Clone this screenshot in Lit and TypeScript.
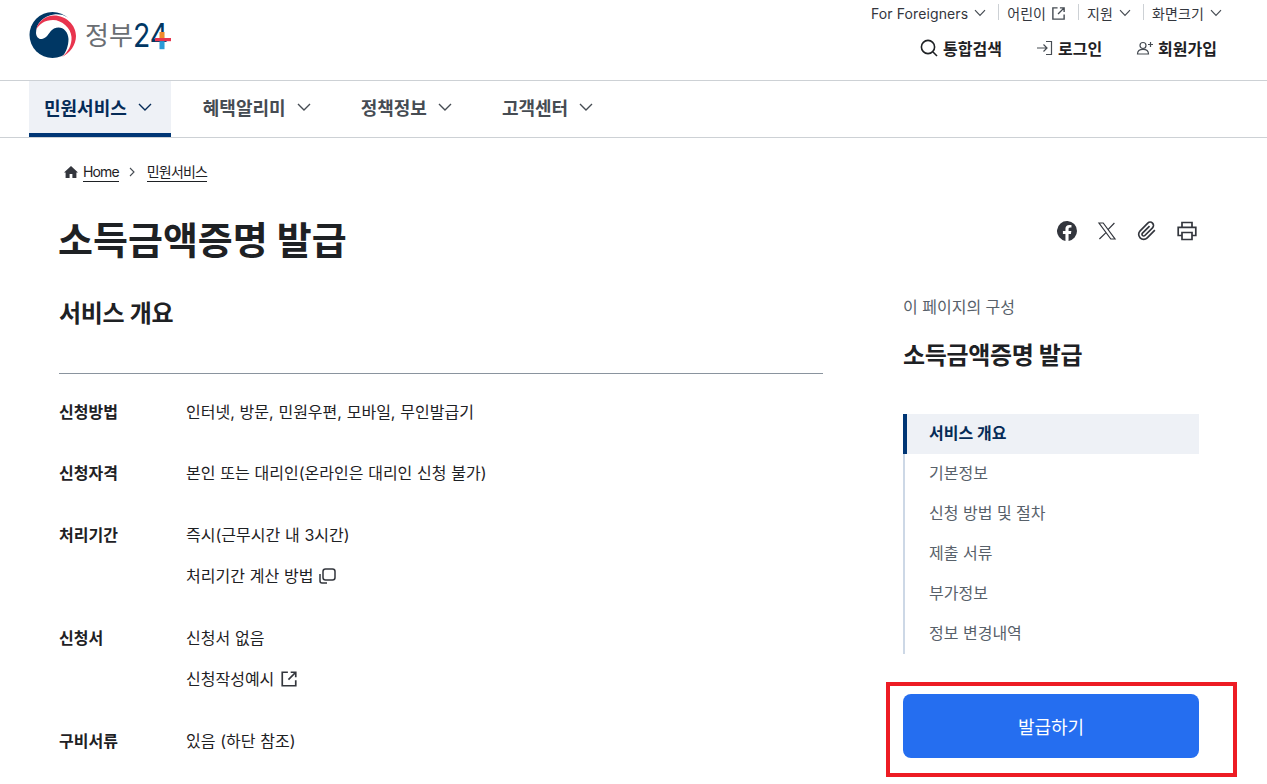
import { LitElement, html, css } from "lit";
import { customElement } from "lit/decorators.js";

const chev = html`<svg class="chev" viewBox="0 0 12 8" fill="none" stroke="currentColor" stroke-width="1.2"><path d="M1 1.2 6 6.4 11 1.2"/></svg>`;
const navChev = html`<svg class="navchev" viewBox="0 0 14 8" fill="none" stroke="currentColor" stroke-width="1.4"><path d="M1 1 7 7 13 1"/></svg>`;
const ext = (c: string) => html`<svg class=${c} viewBox="0 0 16 16" fill="none" stroke="currentColor" stroke-width="1.5"><path d="M7 2H2v12h12V9M9.5 2H14v4.5M14 2 7.5 8.5"/></svg>`;

const rows: [string, string[]][] = [
  ["신청방법", ["인터넷, 방문, 민원우편, 모바일, 무인발급기"]],
  ["신청자격", ["본인 또는 대리인(온라인은 대리인 신청 불가)"]],
  ["처리기간", ["즉시(근무시간 내 3시간)", "처리기간 계산 방법|copy"]],
  ["신청서", ["신청서 없음", "신청작성예시|ext"]],
  ["구비서류", ["있음 (하단 참조)"]],
];
const toc = ["서비스 개요", "기본정보", "신청 방법 및 절차", "제출 서류", "부가정보", "정보 변경내역"];

@customElement("app-root")
export class AppRoot extends LitElement {
  static styles = css`
    :host { display: block; width: 1267px; height: 784px; overflow: hidden; position: relative; background: #fff;
      font-family: "Inter", "Noto Sans CJK KR", sans-serif; color: #1e2124; }
    a { color: inherit; text-decoration: none; }
    .header { height: 81px; box-sizing: border-box; border-bottom: 1px solid #cdd1d5; display: flex; justify-content: space-between; padding: 0 45px 0 29px; }
    .logo { display: flex; align-items: flex-start; padding-top: 12px; gap: 9px; }
    .logo-mark { width: 47px; height: 46px; }
    .logo-word { width: 86px; height: 46px; overflow: visible; }
    .util { display: flex; flex-direction: column; align-items: flex-end; }
    .top { display: flex; align-items: center; height: 16px; margin-top: 5px; font-size: 14px; letter-spacing: 0.1px; color: #33363d; }
    .top .it { display: flex; align-items: center; gap: 6px; padding: 0 12px 0 9px; position: relative; }
    .top .it:last-child { padding-right: 0; }
    .top .it + .it::before { content: ""; position: absolute; left: 0; top: 1px; height: 16px; width: 1px; background: #cdd1d5; }
    .chev { width: 12px; height: 8px; color: #464c53; }
    .ext-s { width: 15px; height: 15px; color: #464c53; margin-left: -1px; }
    .bottom { display: flex; gap: 34px; margin-top: 17px; margin-right: 5px; font-size: 16px; font-weight: 700; color: #1e2124; }
    .bottom a { display: flex; align-items: center; gap: 4px; height: 20px; }
    .ic { width: 18px; height: 18px; }
    .ic.search { margin-right: 1px; }
    .nav { height: 57px; box-sizing: border-box; border-bottom: 1px solid #cdd1d5; display: flex; padding-left: 29px; gap: 16px; }
    .tab { display: flex; align-items: center; gap: 11px; padding: 0 19px 0 15px; height: 56px; box-sizing: border-box; font-size: 18px; font-weight: 700; color: #464c53; border-bottom: 4px solid transparent; }
    .tab.on { background: #eef1f6; color: #052b57; border-bottom-color: #003675; margin-right: 1px; }
    .navchev { width: 14px; height: 8px; }
    .crumb { display: flex; align-items: center; margin: 24px 0 0 64px; height: 20px; font-size: 14px; letter-spacing: -0.85px; color: #1e2124; }
    .crumb a { border-bottom: 1px solid #1e2124; line-height: 18px; }
    .crumb .home { width: 14px; height: 14px; margin-right: 5px; }
    .crumb .sep { width: 7px; height: 10px; margin: 0 11px 0 10px; color: #464c53; }
    .title-row { display: flex; justify-content: space-between; align-items: center; margin: 30px 70px 0 59px; }
    h1 { margin: 0 0 0 -1px; font-size: 38px; font-weight: 700; line-height: 56px; color: #1e2124; }
    .share { display: flex; gap: 20px; margin-top: -18px; }
    .share svg { width: 20px; height: 20px; color: #33363d; display: block; }
    .cols { display: flex; justify-content: space-between; margin: 0 68px 0 59px; }
    .main { width: 764px; }
    h2 { margin: 29px 0 0; font-size: 24px; letter-spacing: -0.3px; line-height: 34px; font-weight: 700; padding-bottom: 42px; border-bottom: 1px solid #8a949e; color: #1e2124; }
    .row { display: flex; font-size: 16px; line-height: 24px; word-spacing: 0.3px; color: #1e2124; }
    .row .k { width: 127px; flex: none; font-weight: 700; }
    .row .v { display: flex; flex-direction: column; gap: 17px; }
    .row .v span { display: flex; align-items: center; gap: 5px; }
    .rows { display: flex; flex-direction: column; gap: 37.75px; padding-top: 25.6px; }
    .copy, .ext-m { width: 18px; height: 18px; color: #33363d; }
    .ext-m { margin-left: 1px; }
    .side { width: 296px; }
    .side-h { margin-top: 28px; font-size: 16px; line-height: 22px; color: #58616a; }
    h3 { margin: 22px 0 0; font-size: 24px; letter-spacing: -0.35px; line-height: 32px; font-weight: 700; color: #1e2124; }
    .toc { margin-top: 42px; border-left: 2px solid #cdd8e6; display: flex; flex-direction: column; }
    .toc a { height: 40px; box-sizing: border-box; padding-bottom: 4px; display: flex; align-items: center; padding-left: 24px; font-size: 16px; color: #58616a; }
    .toc a.on { background: #eef1f6; color: #052b57; font-weight: 700; border-left: 4px solid #003675; margin-left: -2px; padding-left: 22px; }
    .issue { margin-top: 40px; height: 64px; border-radius: 8px; background: #256ef0; color: #fff; display: flex; align-items: center; justify-content: center; font-size: 18px; font-weight: 400; }
    .mark { position: absolute; left: 886px; top: 682px; width: 351px; height: 95px; box-sizing: border-box; border: 4px solid #ed1c24; pointer-events: none; }
  `;

  render() {
    return html`
      <div class="header">
        <a class="logo" href="#" aria-label="정부24">
          <svg class="logo-mark" viewBox="0 0 47 46">
            <circle cx="23.5" cy="23" r="23" fill="#003764"/>
            <path fill="#fff" d="M7 21C7 11 15 3.5 25 2.5 30 2 34 3 37 4.5L48 10V46L33 45C37.5 40 39.5 33 39.5 27 39 18 32 13 25 16.5 20 19 19 26 13 27 10 27.5 7.2 25 7 21Z"/>
            <path fill="#e8344e" d="M7 18C9 9 17 3.5 25 3.5 37 3.5 47 13 47 24 47 33 41 41 33 45 39 40 43 33 42.5 25 42 16 33 8 24 8 16 8 10 12 7 18Z"/>
          </svg>
          <svg class="logo-word" viewBox="0 0 86 46" role="img" aria-label="정부24">
            <text x="0" y="33" font-family="Noto Sans CJK KR" font-size="26" font-weight="400" fill="#6a6e73">정부</text>
            <text transform="translate(48 35) scale(.86 1)" font-family="Inter" font-size="33" font-weight="400" fill="#003764">24</text>
            <rect x="70" y="26" width="16" height="3.2" fill="#e8344e"/>
            <rect x="74.5" y="20" width="5" height="6" fill="#f08a2c"/>
            <rect x="74.5" y="29.2" width="5" height="8" fill="#2b9bd8"/>
          </svg>
        </a>
        <div class="util">
          <div class="top">
            <a class="it" href="#">For Foreigners ${chev}</a>
            <a class="it" href="#">어린이 ${ext("ext-s")}</a>
            <a class="it" href="#">지원 ${chev}</a>
            <a class="it" href="#">화면크기 ${chev}</a>
          </div>
          <div class="bottom">
            <a href="#"><svg class="ic search" viewBox="0 0 18 18" fill="none" stroke="#1e2124" stroke-width="1.6"><circle cx="8" cy="8" r="6.6"/><path d="m13 13 4 4"/></svg>통합검색</a>
            <a href="#"><svg class="ic" viewBox="0 0 18 18" fill="none" stroke="#464c53" stroke-width="1.2"><path d="M1 9h10M7.5 5.5 11 9l-3.5 3.5M10 2.5h5.5v13H10"/></svg>로그인</a>
            <a href="#"><svg class="ic" viewBox="0 0 18 18" fill="none" stroke="#464c53" stroke-width="1.2"><circle cx="7" cy="6.5" r="3"/><path d="M1.5 15c0-3 2.4-4.6 5.5-4.6s5.5 1.6 5.5 4.6ZM14.5 3v5M12 5.5h5"/></svg>회원가입</a>
          </div>
        </div>
      </div>
      <nav class="nav">
        <a class="tab on" href="#">민원서비스 ${navChev}</a>
        <a class="tab" href="#">혜택알리미 ${navChev}</a>
        <a class="tab" href="#">정책정보 ${navChev}</a>
        <a class="tab" href="#">고객센터 ${navChev}</a>
      </nav>
      <div class="crumb">
        <svg class="home" viewBox="0 0 14 14"><path fill="#33363d" d="M7 1 0 7.4h1.6V13h4V9h2.8v4h4V7.4H14Z"/></svg>
        <a href="#">Home</a>
        <svg class="sep" viewBox="0 0 7 10" fill="none" stroke="currentColor" stroke-width="1.1"><path d="m1 1 4 4-4 4"/></svg>
        <a href="#">민원서비스</a>
      </div>
      <div class="title-row">
        <h1>소득금액증명 발급</h1>
        <div class="share">
          <svg viewBox="0 0 20 20"><path fill="currentColor" d="M20 10a10 10 0 1 0-11.56 9.88v-6.99H5.9V10h2.54V7.8c0-2.5 1.49-3.89 3.78-3.89 1.09 0 2.24.2 2.24.2v2.46h-1.26c-1.24 0-1.63.77-1.63 1.56V10h2.78l-.45 2.89h-2.33v6.99A10 10 0 0 0 20 10Z"/></svg>
          <svg viewBox="0 0 20 20" fill="none" stroke="currentColor" stroke-width="1.2"><path d="M2 2h4.2l11.8 16h-4.2ZM11 8.6 17.4 2M9 11.6 2.4 18"/></svg>
          <svg viewBox="0 0 24 24" fill="none" stroke="currentColor" stroke-width="2"><path d="M21.44 11.05l-9.19 9.19a6 6 0 0 1-8.49-8.49l9.19-9.19a4 4 0 0 1 5.66 5.66l-9.2 9.19a2 2 0 0 1-2.83-2.83l8.49-8.48"/></svg>
          <svg viewBox="0 0 20 20" fill="none" stroke="currentColor" stroke-width="1.7"><path d="M5 6V1.5h10V6M5 14.5H1.2V6.4h17.6v8.1H15M5 11.5h10v7H5Z"/></svg>
        </div>
      </div>
      <div class="cols">
        <section class="main">
          <h2>서비스 개요</h2>
          <div class="rows">
            ${rows.map(([k, vs]) => html`
              <div class="row">
                <div class="k">${k}</div>
                <div class="v">
                  ${vs.map((v) => {
                    const [t, i] = v.split("|");
                    return html`<span>${t}${i === "copy"
                      ? html`<svg class="copy" viewBox="0 0 18 18" fill="none" stroke="currentColor" stroke-width="1.5"><rect x="5" y="2" width="12" height="11" rx="2.5"/><path d="M2 7v7a2 2 0 0 0 2 2h5"/></svg>`
                      : i === "ext" ? ext("ext-m") : ""}</span>`;
                  })}
                </div>
              </div>`)}
          </div>
        </section>
        <aside class="side">
          <div class="side-h">이 페이지의 구성</div>
          <h3>소득금액증명 발급</h3>
          <div class="toc">
            ${toc.map((t, i) => html`<a class=${i === 0 ? "on" : ""} href="#">${t}</a>`)}
          </div>
          <a class="issue" href="#">발급하기</a>
        </aside>
      </div>
      <div class="mark"></div>
    `;
  }
}
